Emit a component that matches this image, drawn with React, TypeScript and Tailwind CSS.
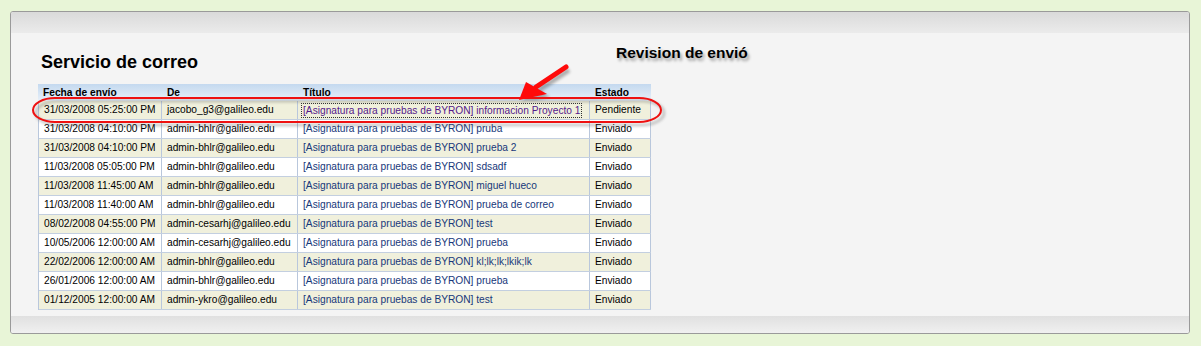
import React from 'react';

interface Envio {
  fecha: string;
  de: string;
  titulo: string;
  estado: string;
}

const envios: Envio[] = [
  { fecha: '31/03/2008 05:25:00 PM', de: 'jacobo_g3@galileo.edu', titulo: '[Asignatura para pruebas de BYRON] informacion Proyecto 1', estado: 'Pendiente' },
  { fecha: '31/03/2008 04:10:00 PM', de: 'admin-bhlr@galileo.edu', titulo: '[Asignatura para pruebas de BYRON] pruba', estado: 'Enviado' },
  { fecha: '31/03/2008 04:10:00 PM', de: 'admin-bhlr@galileo.edu', titulo: '[Asignatura para pruebas de BYRON] prueba 2', estado: 'Enviado' },
  { fecha: '11/03/2008 05:05:00 PM', de: 'admin-bhlr@galileo.edu', titulo: '[Asignatura para pruebas de BYRON] sdsadf', estado: 'Enviado' },
  { fecha: '11/03/2008 11:45:00 AM', de: 'admin-bhlr@galileo.edu', titulo: '[Asignatura para pruebas de BYRON] miguel hueco', estado: 'Enviado' },
  { fecha: '11/03/2008 11:40:00 AM', de: 'admin-bhlr@galileo.edu', titulo: '[Asignatura para pruebas de BYRON] prueba de correo', estado: 'Enviado' },
  { fecha: '08/02/2008 04:55:00 PM', de: 'admin-cesarhj@galileo.edu', titulo: '[Asignatura para pruebas de BYRON] test', estado: 'Enviado' },
  { fecha: '10/05/2006 12:00:00 AM', de: 'admin-cesarhj@galileo.edu', titulo: '[Asignatura para pruebas de BYRON] prueba', estado: 'Enviado' },
  { fecha: '22/02/2006 12:00:00 AM', de: 'admin-bhlr@galileo.edu', titulo: '[Asignatura para pruebas de BYRON] kl;lk;lk;lkik;lk', estado: 'Enviado' },
  { fecha: '26/01/2006 12:00:00 AM', de: 'admin-bhlr@galileo.edu', titulo: '[Asignatura para pruebas de BYRON] prueba', estado: 'Enviado' },
  { fecha: '01/12/2005 12:00:00 AM', de: 'admin-ykro@galileo.edu', titulo: '[Asignatura para pruebas de BYRON] test', estado: 'Enviado' },
];

// marca roja dibujada encima de la captura (óvalo + flecha)
const Anotacion: React.FC = () => (
  <svg className="absolute left-0 top-0 pointer-events-none" width="1201" height="346" viewBox="0 0 1201 346">
    <defs>
      <filter id="sombra" x="-10%" y="-50%" width="120%" height="200%">
        <feGaussianBlur stdDeviation="1.6" />
      </filter>
    </defs>
    <g transform="translate(3 3)" filter="url(#sombra)" opacity="0.45">
      <rect x="33" y="98" width="628" height="24" rx="22" ry="12" fill="none" stroke="#555" strokeWidth="2" />
      <line x1="566" y1="67" x2="536" y2="87" stroke="#555" strokeWidth="5" />
      <polygon points="519,100 526,82 547,94" fill="#555" />
    </g>
    <rect x="33" y="98" width="628" height="24" rx="22" ry="12" fill="none" stroke="#ee1111" strokeWidth="2" />
    <line x1="566" y1="67" x2="536" y2="87" stroke="#ff0a0a" strokeWidth="5" strokeLinecap="round" />
    <polygon points="519,100 526,82 547,94" fill="#ff0a0a" />
  </svg>
);

export default function App() {
  return (
    <div className="relative w-[1201px] h-[346px] bg-[#e8f5d7] pt-[11px] pl-[10px] pr-[11px] pb-[12px]" style={{ fontFamily: '"Liberation Sans", Arial, sans-serif' }}>
      <div className="h-[323px] border border-[#9a9a9a] rounded-[3px] bg-[#f4f4f4] flex flex-col overflow-hidden">
        <div className="h-[21px] bg-gradient-to-b from-[#dadada] to-[#ebebeb]" />
        <div className="flex-1 pl-[27px] pt-[11px]">
          <div className="flex">
            <div className="w-[578px] pl-[3px] pt-[8px]">
              <h2 className="text-[18px] leading-[21px] font-bold text-black">Servicio de correo</h2>
            </div>
            <p className="text-[15.5px] leading-[18px] font-bold text-black [text-shadow:2px_3px_3px_rgba(0,0,0,0.35)]">Revision de envió</p>
          </div>
          <div className="mt-[11px] w-[613px] text-[10.2px] text-black">
            <div className="h-[17px] flex items-end pb-[1px] font-bold bg-gradient-to-b from-[#c4d9ef] to-[#e8f0f9]">
              <div className="w-[124px] pl-[5px]">Fecha de envío</div>
              <div className="w-[136px] pl-[5px]">De</div>
              <div className="w-[292px] pl-[5px]">Título</div>
              <div className="flex-1 pl-[5px]">Estado</div>
            </div>
            <div className="border-l border-[#b9c7dc]">
              {envios.map((e, i) => (
                <div
                  key={i}
                  className={`h-[19px] flex border-b border-[#c3cfe0] ${i % 2 === 0 ? 'bg-[#f0f0dc]' : 'bg-white'}`}
                >
                  <div className="w-[123px] border-r border-[#b9c7dc] pl-[5px] flex items-center">{e.fecha}</div>
                  <div className="w-[136px] border-r border-[#b9c7dc] pl-[5px] flex items-center">{e.de}</div>
                  <div className="w-[292px] border-r border-[#b9c7dc] pl-[4px] flex items-center">
                    {i === 0 ? (
                      <a className="text-[#551a8b] outline-1 outline-dotted outline-[#333] pl-[1px] pr-[1px] leading-[13px]">{e.titulo}</a>
                    ) : (
                      <a className="text-[#17387a] pl-[1px]">{e.titulo}</a>
                    )}
                  </div>
                  <div className="flex-1 border-r border-[#b9c7dc] pl-[5px] flex items-center">{e.estado}</div>
                </div>
              ))}
            </div>
          </div>
        </div>
        <div className="h-[17px] bg-gradient-to-b from-[#e0e0e0] to-[#f0f0f0]" />
      </div>
      <Anotacion />
    </div>
  );
}
